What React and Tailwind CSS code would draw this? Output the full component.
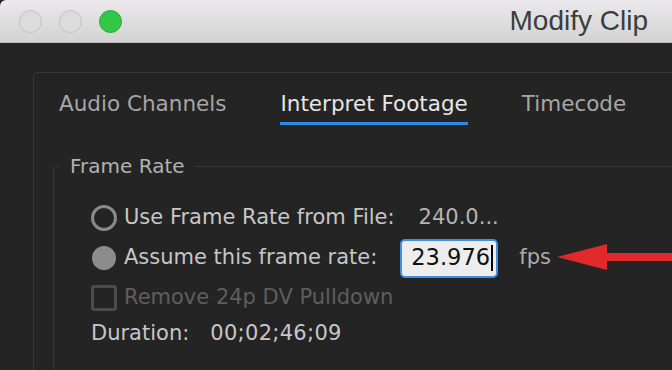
import React from 'react';

const Light = ({ color }) => (
  <div className={`w-[23px] h-[23px] rounded-full border ${color}`}></div>
);

const Tab = ({ label, active }) => (
  <div className="flex flex-col">
    <span className={`h-[24px] leading-[24px] text-[21.5px] ${active ? 'text-[#e6e6e6]' : 'text-[#a6a6a6]'}`}>
      {label}
    </span>
    <div className={`mt-[6px] h-[3px] ${active ? 'bg-[#2e8be6]' : 'bg-transparent'}`}></div>
  </div>
);

const Arrow = () => (
  <svg width="130" height="28" viewBox="0 0 130 28" className="shrink-0">
    <polygon points="0,13 50,0 50,9 130,9 130,17 50,17 50,26" fill="#e1292b" />
  </svg>
);

export default function App() {
  return (
    <div
      className="w-[672px] h-[370px] overflow-hidden bg-[#232323] flex flex-col"
      style={{ fontFamily: '"DejaVu Sans", "Liberation Sans", sans-serif' }}
    >
      <header className="h-[43px] shrink-0 flex items-center justify-between pl-[19px] pr-[24px] bg-gradient-to-b from-[#ebe9eb] to-[#d3d3d3] border-b border-[#b9b9b9] rounded-tl-[6px]">
        <div className="flex items-center gap-[17px]">
          <Light color="bg-[#dcdcdc] border-[#c3c3c3]" />
          <Light color="bg-[#dcdcdc] border-[#c3c3c3]" />
          <Light color="bg-[#33c748] border-[#2aa93b]" />
        </div>
        <h1
          className="text-[28px] text-[#3d3d3d]"
          style={{ fontFamily: '"Liberation Sans", Arial, sans-serif' }}
        >
          Modify Clip
        </h1>
      </header>

      <div className="pt-[29px] pl-[33px]">
        <div className="w-[700px] h-[320px] border border-[#363636] rounded-tl-[4px] bg-[#242424]">
          <nav className="flex gap-[54px] pl-[25px] pt-[19px]">
            <Tab label="Audio Channels" />
            <Tab label="Interpret Footage" active />
            <Tab label="Timecode" />
          </nav>

          <fieldset className="ml-[19px] mt-[29px] w-[680px] h-[260px] border border-[#363636] rounded-tl-[4px]">
            <legend className="ml-[6px] px-[10px] h-[24px] leading-[24px] text-[20px] text-[#b2b2b2]">
              Frame Rate
            </legend>

            <div className="flex flex-col pl-[37px] pt-[20px] text-[21px] text-[#c6c6c6]">
              <div className="h-[40px] flex items-center">
                <div className="w-[26px] h-[26px] rounded-full border-[3px] border-[#8a8a8a]"></div>
                <span className="ml-[7px]">Use Frame Rate from File:</span>
                <span className="ml-[24px] text-[#b4b4b4]">240.0...</span>
              </div>

              <div className="h-[40px] flex items-center">
                <div className="w-[24px] h-[24px] ml-[1px] rounded-full bg-[#8c8c8c]"></div>
                <span className="ml-[8px]">Assume this frame rate:</span>
                <div className="ml-[23px] w-[98px] h-[39px] rounded-[5px] border-2 border-[#3f90e2] bg-[#ededed] flex items-center pl-[9px] text-[22.5px] text-[#111]">
                  23.976
                  <span className="w-[2px] h-[26px] bg-black ml-[1px]"></span>
                </div>
                <span className="ml-[21px] text-[#ababab]">fps</span>
                <div className="ml-[6px]">
                  <Arrow />
                </div>
              </div>

              <div className="h-[40px] flex items-center">
                <div className="w-[26px] h-[26px] rounded-[3px] border-[3px] border-[#4b4b4b]"></div>
                <span className="ml-[7px] text-[#5e5e5e]">Remove 24p DV Pulldown</span>
              </div>

              <div className="h-[32px] flex items-center">
                <span>Duration:</span>
                <span className="ml-[21px] tracking-[0.3px]">00;02;46;09</span>
              </div>
            </div>
          </fieldset>
        </div>
      </div>
    </div>
  );
}
